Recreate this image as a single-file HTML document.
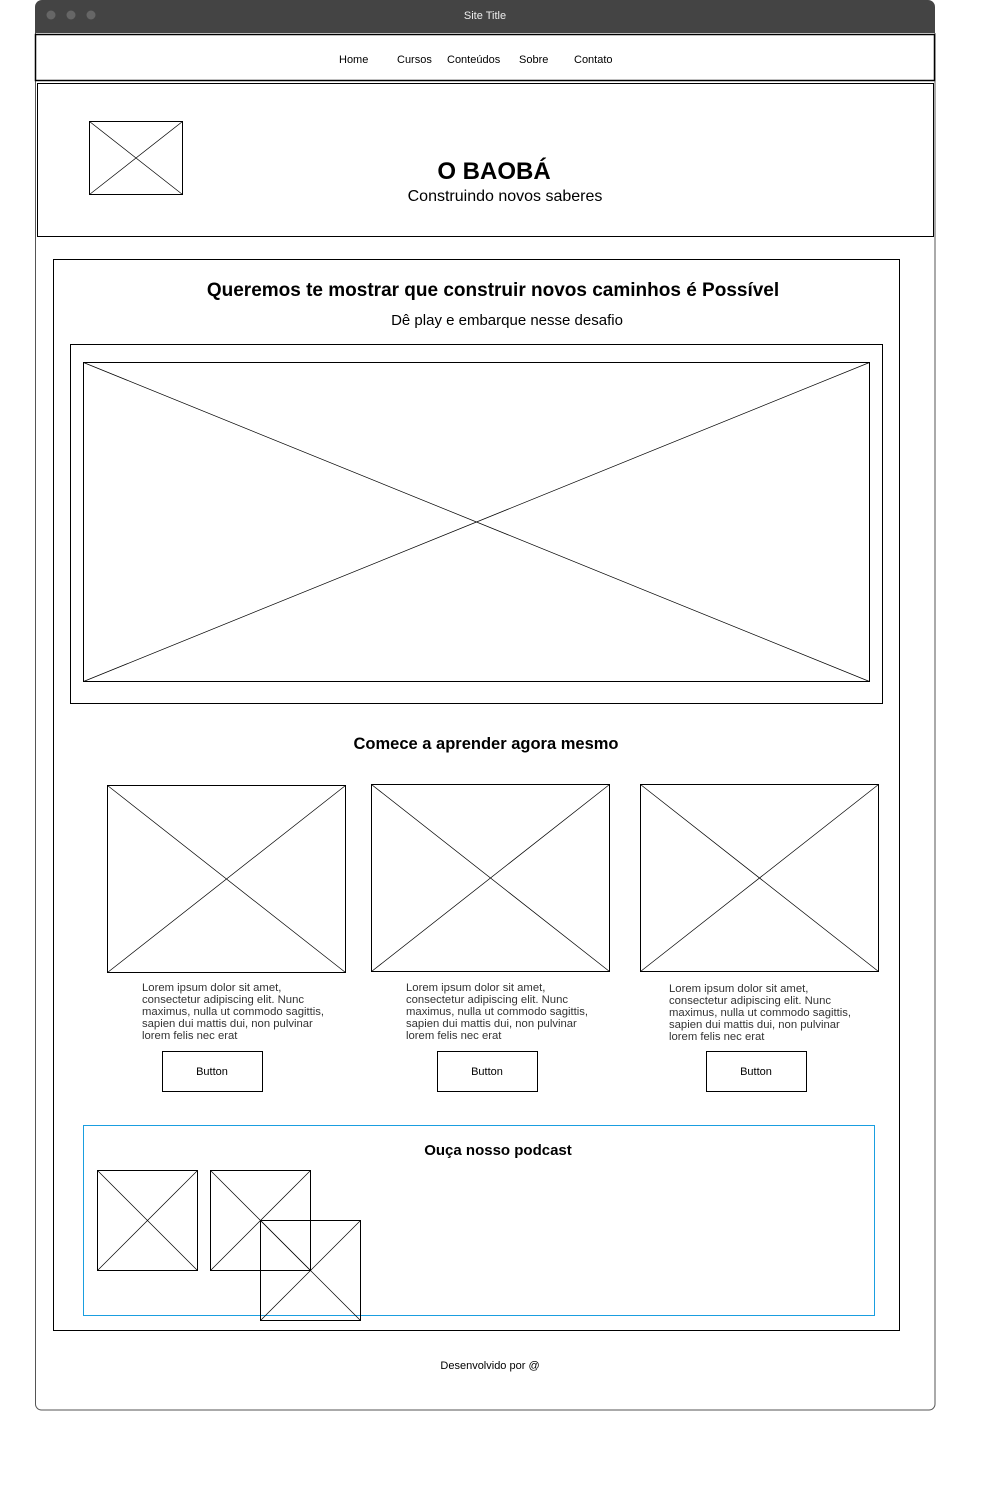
<!DOCTYPE html>
<html><head><meta charset="utf-8"><style>
body{margin:0;width:1000px;height:1510px;background:#fff;position:relative;font-family:"Liberation Sans",sans-serif;color:#000;overflow:hidden}
.t{position:absolute;white-space:nowrap;line-height:1}
.c{transform:translateX(-50%)}
.p{position:absolute;font-size:11.3px;line-height:12px;color:#333;white-space:nowrap}
</style></head><body>
<svg width="1000" height="1510" style="position:absolute;left:0;top:0" fill="none" stroke="#000" stroke-width="1">
<path d="M35.5 33 V1404 a6 6 0 0 0 6 6 H929 a6 6 0 0 0 6-6 V33" stroke="#555"/>
<path d="M35 33 V7 a7 7 0 0 1 7-7 H928 a7 7 0 0 1 7 7 V33 Z" fill="#444" stroke="none"/>
<circle cx="51" cy="15" r="4.5" fill="#666" stroke="none"/>
<circle cx="71" cy="15" r="4.5" fill="#666" stroke="none"/>
<circle cx="91" cy="15" r="4.5" fill="#666" stroke="none"/>
<rect x="35.5" y="34.5" width="899" height="46" stroke-width="1.5"/>
<rect x="37.5" y="83.5" width="896" height="153"/>
<rect x="89.5" y="121.5" width="93" height="73"/><path d="M89.5 121.5 L182.5 194.5 M182.5 121.5 L89.5 194.5" stroke-width=".7"/>
<rect x="53.5" y="259.5" width="846" height="1071"/>
<rect x="70.5" y="344.5" width="812" height="359"/>
<rect x="83.5" y="362.5" width="786" height="319"/><path d="M83.5 362.5 L869.5 681.5 M869.5 362.5 L83.5 681.5" stroke-width=".7"/>
<rect x="107.5" y="785.5" width="238" height="187"/><path d="M107.5 785.5 L345.5 972.5 M345.5 785.5 L107.5 972.5" stroke-width=".7"/>
<rect x="371.5" y="784.5" width="238" height="187"/><path d="M371.5 784.5 L609.5 971.5 M609.5 784.5 L371.5 971.5" stroke-width=".7"/>
<rect x="640.5" y="784.5" width="238" height="187"/><path d="M640.5 784.5 L878.5 971.5 M878.5 784.5 L640.5 971.5" stroke-width=".7"/>
<rect x="162.5" y="1051.5" width="100" height="40"/>
<rect x="437.5" y="1051.5" width="100" height="40"/>
<rect x="706.5" y="1051.5" width="100" height="40"/>
<rect x="83.5" y="1125.5" width="791" height="190" stroke="#1a9ee0"/>
<rect x="97.5" y="1170.5" width="100" height="100"/><path d="M97.5 1170.5 L197.5 1270.5 M197.5 1170.5 L97.5 1270.5" stroke-width=".7"/>
<rect x="210.5" y="1170.5" width="100" height="100"/><path d="M210.5 1170.5 L310.5 1270.5 M310.5 1170.5 L210.5 1270.5" stroke-width=".7"/>
<rect x="260.5" y="1220.5" width="100" height="100"/><path d="M260.5 1220.5 L360.5 1320.5 M360.5 1220.5 L260.5 1320.5" stroke-width=".7"/>
</svg>
<div class="t c" style="left:485px;top:11px;font-size:11px;color:#eee">Site Title</div>
<div class="t" style="left:339px;top:55px;font-size:11px">Home</div>
<div class="t" style="left:397px;top:55px;font-size:11px">Cursos</div>
<div class="t" style="left:447px;top:55px;font-size:11px">Conteúdos</div>
<div class="t" style="left:519px;top:55px;font-size:11px">Sobre</div>
<div class="t" style="left:574px;top:55px;font-size:11px">Contato</div>
<div class="t c" style="left:494px;top:160px;font-size:24px;font-weight:bold">O BAOBÁ</div>
<div class="t c" style="left:505px;top:189px;font-size:16px">Construindo novos saberes</div>
<div class="t c" style="left:493px;top:281px;font-size:19px;font-weight:bold">Queremos te mostrar que construir novos caminhos é Possível</div>
<div class="t c" style="left:507px;top:313px;font-size:15px">Dê play e embarque nesse desafio</div>
<div class="t c" style="left:486px;top:736px;font-size:16.5px;font-weight:bold">Comece a aprender agora mesmo</div>
<div class="p" style="left:142px;top:982px">Lorem ipsum dolor sit amet,<br>consectetur adipiscing elit. Nunc<br>maximus, nulla ut commodo sagittis,<br>sapien dui mattis dui, non pulvinar<br>lorem felis nec erat</div>
<div class="p" style="left:406px;top:982px">Lorem ipsum dolor sit amet,<br>consectetur adipiscing elit. Nunc<br>maximus, nulla ut commodo sagittis,<br>sapien dui mattis dui, non pulvinar<br>lorem felis nec erat</div>
<div class="p" style="left:669px;top:983px">Lorem ipsum dolor sit amet,<br>consectetur adipiscing elit. Nunc<br>maximus, nulla ut commodo sagittis,<br>sapien dui mattis dui, non pulvinar<br>lorem felis nec erat</div>
<div class="t c" style="left:212px;top:1067px;font-size:11px">Button</div>
<div class="t c" style="left:487px;top:1067px;font-size:11px">Button</div>
<div class="t c" style="left:756px;top:1067px;font-size:11px">Button</div>
<div class="t c" style="left:498px;top:1143px;font-size:15px;font-weight:bold">Ouça nosso podcast</div>
<div class="t c" style="left:490px;top:1361px;font-size:11px">Desenvolvido por @</div>
</body></html>
